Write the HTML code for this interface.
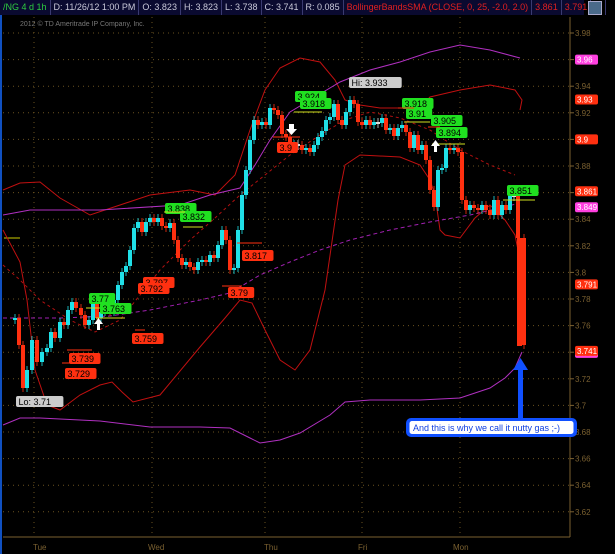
<!DOCTYPE html>
<html><head><meta charset="utf-8"><style>
body{margin:0;background:#000;width:615px;height:554px;overflow:hidden;font-family:"Liberation Sans",sans-serif}
#hdr{position:absolute;left:0;top:0;width:584px;height:15px;background:#0a0a30;display:flex;font-size:9px;line-height:15px}
#hdr span{border-right:1px solid #3a3a70;padding:0 3px;color:#c8c8d8;white-space:nowrap}
svg{position:absolute;left:0;top:0}
</style></head><body>
<svg id="s" width="615" height="554" viewBox="0 0 615 554" font-family="Liberation Sans" font-size="8"></svg>
<div id="hdr"><span style="color:#2ecc40">/NG 4 d 1h</span><span>D: 11/26/12 1:00 PM</span><span>O: 3.823</span><span>H: 3.823</span><span>L: 3.738</span><span>C: 3.741</span><span>R: 0.085</span><span style="color:#e02020">BollingerBandsSMA (CLOSE, 0, 25, -2.0, 2.0)</span><span style="color:#e02020">3.861</span><span style="color:#e02020">3.791</span><span style="color:#e02020">3.</span></div>
<div style="position:absolute;left:588px;top:1px;width:12px;height:12px;background:#4a6a8a;border:1px solid #aac"></div>
<script>
var s=document.getElementById('s'),h='';
function Y(p){return 33+(3.98-p)/0.02*26.6}
h+='<rect x="0" y="0" width="2" height="554" fill="#1050c0"/>';
for(var p=3.62;p<=3.981;p+=0.02){var y=Y(p).toFixed(1);h+='<line x1="3" x2="570" y1="'+y+'" y2="'+y+'" stroke="#6a5220" stroke-dasharray="1,4"/><line x1="570" x2="574" y1="'+y+'" y2="'+y+'" stroke="#7a6030"/><text x="575" y="'+(+y+3)+'" fill="#7a6030">'+(Math.round(p*100)/100)+'</text>';}
[34,152,265,362,460].forEach(function(x){h+='<line x1="'+x+'" x2="'+x+'" y1="17" y2="537" stroke="#6a5220" stroke-dasharray="1,4"/>';});
h+='<line x1="3" x2="570" y1="537" y2="537" stroke="#7a6030"/><line x1="570" x2="570" y1="17" y2="537" stroke="#7a6030"/>';
[['Tue',33],['Wed',148],['Thu',264],['Fri',358],['Mon',453]].forEach(function(d){h+='<text x="'+d[1]+'" y="550" fill="#7a6030">'+d[0]+'</text>';});
h+='<text x="20" y="26" fill="#777" font-size="7">2012 © TD Ameritrade IP Company, Inc.</text>';
h+='<line x1="4" x2="20" y1="238" y2="238" stroke="#cc0"/>';
function pl(pts,c,d){h+='<polyline fill="none" stroke="'+c+'" stroke-width="1" '+(d?'stroke-dasharray="'+d+'"':'')+' points="'+pts+'"/>';}
pl('3,190 20,183 40,182 60,198 90,215 120,205 150,195 190,190 215,195 235,175 250,130 265,90 280,68 300,58 320,62 335,80 345,100 360,105 380,108 420,108 430,97 460,90 490,85 515,90 522,100 520,110','#c01010');
pl('3,230 20,262 27,300 35,370 47,405 60,410 80,395 100,385 112,382 122,392 133,402 160,395 200,347 225,318 240,300 252,303 265,330 280,360 295,370 310,350 325,290 338,200 345,165 360,155 400,157 420,165 430,180 435,195 440,230 445,235 460,238 475,218 490,205 505,220 515,235 520,260 522,320','#c01010');
pl('3,215 30,210 100,210 180,205 210,195 240,188 255,165 270,140 290,112 310,100 340,82 370,70 400,62 430,52 460,45 490,50 520,58','#b030c0');
pl('3,425 20,418 40,418 100,421 150,427 200,427 230,428 250,438 260,443 280,440 300,433 330,415 345,402 370,400 420,400 460,398 490,388 505,378 515,368 522,352','#b030c0');
pl('3,318 60,318 110,316 150,310 200,300 230,293 260,275 290,262 320,250 350,240 390,230 430,222 470,215 500,208 520,203','#a020b0','4,3');
pl('3,265 20,280 40,300 70,320 95,332 120,320 140,295 160,270 190,240 215,218 240,195 265,175 290,155 320,135 345,120 370,112 400,118 430,130 460,150 490,165 515,175','#b01010','3,3');
var C=[[8,320],[13,318],[17,345],[21,388],[25,370],[30,340],[35,362],[40,352],[45,348],[49,332],[53,338],[58,322],[62,325],[66,310],[70,302],[74,308],[79,315],[83,325],[87,320],[91,302],[95,318],[99,312],[103,304],[108,312],[112,300],[116,285],[120,272],[124,266],[128,250],[132,228],[136,222],[140,232],[144,222],[148,218],[152,222],[156,218],[160,226],[164,228],[168,223],[172,240],[176,258],[180,265],[184,262],[188,267],[192,270],[196,262],[200,260],[204,262],[208,255],[212,258],[216,245],[220,230],[224,240],[228,270],[232,268],[236,230],[240,195],[244,170],[248,140],[252,120],[256,125],[260,122],[264,125],[268,108],[272,110],[276,115],[280,134],[284,137],[288,146],[292,144],[296,145],[300,150],[304,148],[308,152],[312,145],[316,137],[320,131],[324,120],[328,117],[332,104],[336,120],[340,125],[344,112],[348,100],[352,104],[356,122],[360,125],[364,120],[368,125],[372,122],[376,123],[380,118],[384,130],[388,128],[392,136],[396,128],[400,125],[404,132],[408,148],[412,135],[416,150],[420,145],[424,160],[428,190],[432,207],[436,170],[440,168],[444,148],[448,150],[452,148],[456,152],[460,200],[464,210],[468,205],[472,208],[476,210],[480,205],[484,210],[488,215],[492,200],[496,215],[500,205],[504,210],[508,195],[512,195],[516,238],[522,345]];
for(var i=1;i<C.length;i++){var x=C[i][0],o=C[i-1][1],c=C[i][1],up=c<o,col=up?'#20e0e8':'#ff3010';var t=Math.min(o,c),b=Math.max(o,c);if(b-t<2){b=t+2;col='#ddd';}
h+='<line x1="'+(x+2)+'" x2="'+(x+2)+'" y1="'+(t-4)+'" y2="'+(b+4)+'" stroke="'+col+'" stroke-width="0.8"/><rect x="'+x+'" y="'+t+'" width="4" height="'+(b-t)+'" fill="'+col+'"/>';}
h+='<rect x="517" y="238" width="5" height="108" fill="#ff3010"/>';
function lab(x,y,t,bg,fg){var w=t.length*5.3+5;h+='<rect x="'+x+'" y="'+y+'" width="'+w+'" height="11" rx="2" fill="'+bg+'"/><text x="'+(x+2.5)+'" y="'+(y+9)+'" fill="'+fg+'" font-size="9">'+t+'</text>';}
var G='#20e020';
[[89,293,'3.77'],[100,303,'3.763'],[165,203,'3.838'],[180,211,'3.832'],[295,91,'3.924'],[300,98,'3.918'],[402,98,'3.918'],[406,108,'3.91'],[431,115,'3.905'],[436,127,'3.894'],[507,185,'3.851']].forEach(function(a){lab(a[0],a[1],a[2],G,'#000')});
[[69,353,'3.739'],[65,368,'3.729'],[132,333,'3.759'],[143,277,'3.797'],[138,283,'3.792'],[242,250,'3.817'],[228,287,'3.79'],[277,142,'3.9']].forEach(function(a){lab(a[0],a[1],a[2],'#ff3010','#000')});
lab(16,396,'Lo: 3.71','#ccc','#000');lab(349,77,'Hi: 3.933','#ccc','#000');
[[86,100,308],[96,125,318],[67,92,350],[62,70,363],[135,145,330],[164,185,212],[183,203,227],[237,262,243],[222,242,286],[273,300,137],[294,322,112],[398,414,108],[404,430,122],[428,440,127],[432,465,144],[503,535,200]].forEach(function(l){h+='<line x1="'+l[0]+'" x2="'+l[1]+'" y1="'+l[2]+'" y2="'+l[2]+'" stroke="'+(l[2]==308||l[2]==318||l[2]==212||l[2]==227||l[2]==112||l[2]==122||l[2]==144||l[2]==200?'#d0e020':'#ff3010')+'"/>';});
[[3.96,'#ff40e0'],[3.93,'#ff3010'],[3.9,'#ff3010'],[3.861,'#ff3010'],[3.849,'#ff40e0'],[3.791,'#ff3010'],[3.7395,'#ff40e0'],[3.741,'#ff3010']].forEach(function(a){var y=Y(a[0])-5;h+='<rect x="575" y="'+y+'" width="23" height="10" rx="2" fill="'+a[1]+'"/><text x="577" y="'+(y+8)+'" fill="#fff">'+(a[0]==3.7395?'3.739':a[0])+'</text>';});
h+='<polygon points="289,124 294,124 294,129 297,129 291.5,135 286,129 289,129" fill="#fff"/>';
h+='<polygon points="97,330 100,330 100,324 103,324 98.5,318 94,324 97,324" fill="#fff"/>';
h+='<polygon points="434,152 437,152 437,146 440,146 435.5,140 431,146 434,146" fill="#fff"/>';
h+='<rect x="518" y="368" width="5" height="50" fill="#1050ff"/><polygon points="513,370 528,370 520.5,358" fill="#1050ff"/>';
h+='<rect x="406" y="418" width="171" height="19" rx="5" fill="#1050ff"/><rect x="409" y="420.5" width="165" height="14" rx="3" fill="#fff" stroke="#1050ff"/><text x="413" y="431" fill="#1040e0" font-size="9">And this is why we call it nutty gas ;-)</text>';
s.innerHTML=h;
</script>
</body></html>
